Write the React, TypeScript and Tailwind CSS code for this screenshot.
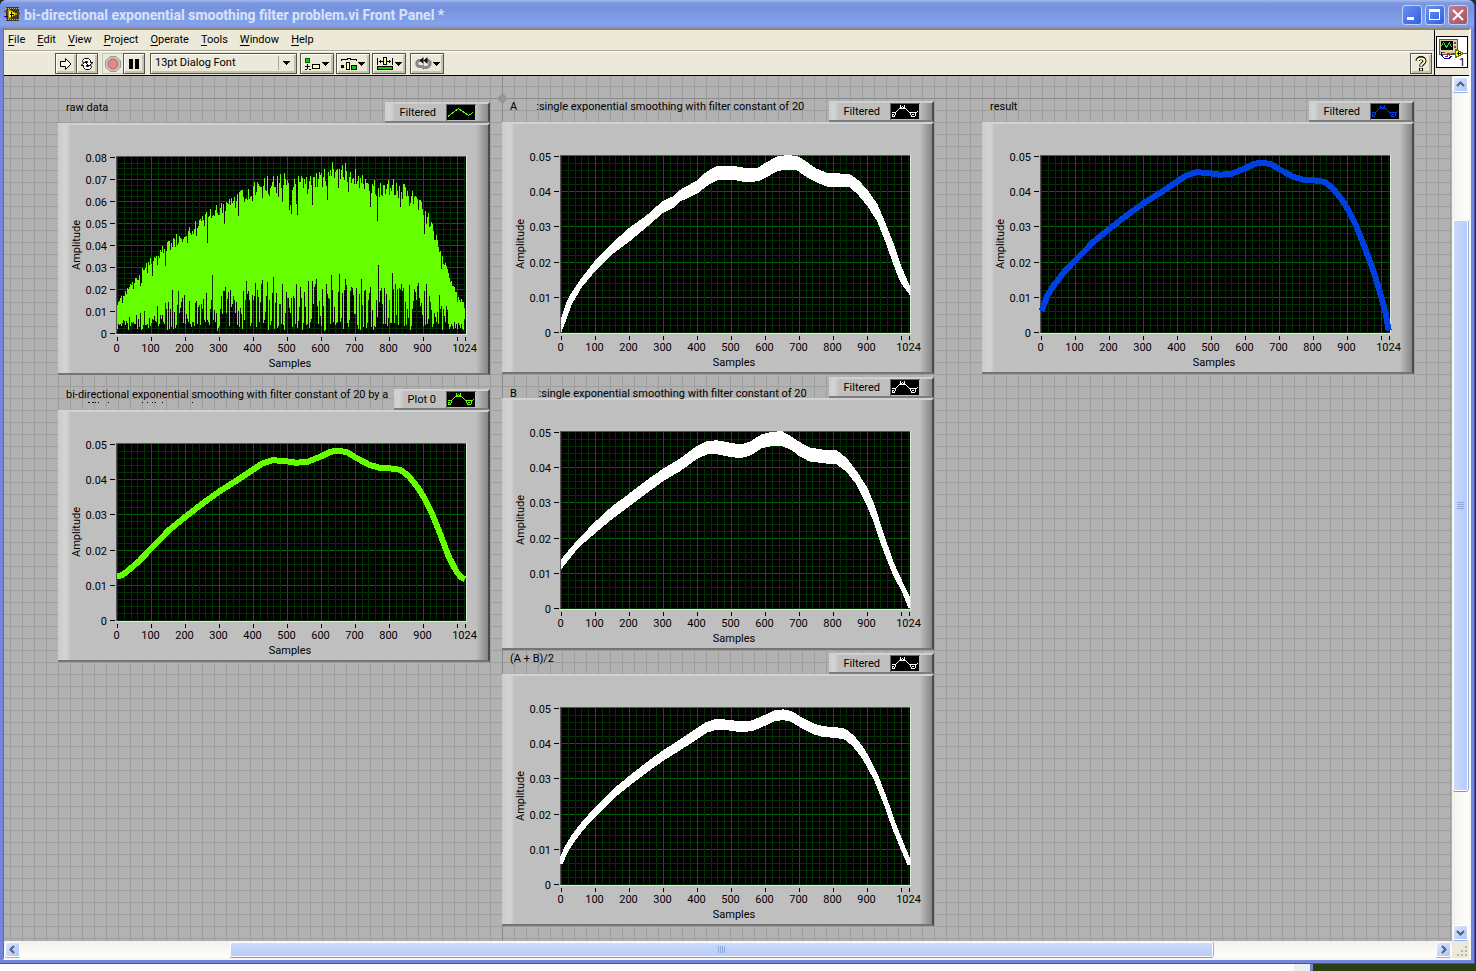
import React from 'react'

type Point = [number, number]
type Band = [number, number, number]

// Plot area inside a 432x252 graph plate
const PLOT = { left: 59, top: 34, width: 348, height: 176 }
const MAX_SAMPLE = 1024

const BODY: Point[] = [
  [66, 0.0168], [101, 0.0204], [154, 0.0256], [201, 0.0293], [252, 0.0331], [301, 0.0365],
  [350, 0.0395], [399, 0.0426], [428, 0.0445], [458, 0.0454], [497, 0.0451], [526, 0.0447],
  [560, 0.0449], [601, 0.0465], [629, 0.0478], [654, 0.0481], [678, 0.0476], [703, 0.0461],
  [742, 0.0441], [771, 0.0433], [810, 0.043], [835, 0.0426], [859, 0.0408], [884, 0.0378],
  [903, 0.0348], [928, 0.03], [953, 0.0239],
]

const RESULT: Point[] = [
  [2, 0.0059], [17, 0.0101], [36, 0.013], ...BODY, [977, 0.0177], [1001, 0.0101], [1014, 0.0054], [1023, 0.0004],
]

const BIDIRECTIONAL: Point[] = [
  [0, 0.0125], [15, 0.0127], [32, 0.014], ...BODY, [977, 0.0178], [1000, 0.0136], [1012, 0.0122], [1024, 0.0116],
]

const FORWARD: Band[] = [
  [0, 0.0035, 0], [15, 0.0078, 0.0038], [30, 0.0108, 0.0078], [60, 0.0151, 0.0128], [100, 0.02, 0.0174],
  [150, 0.025, 0.0222], [200, 0.0294, 0.0258], [250, 0.0328, 0.0298], [300, 0.0371, 0.034],
  [330, 0.0384, 0.0354], [350, 0.0402, 0.0372], [400, 0.0429, 0.0394], [430, 0.0455, 0.0417],
  [460, 0.047, 0.0433], [510, 0.047, 0.0433], [550, 0.0464, 0.0426], [580, 0.0466, 0.043],
  [605, 0.0481, 0.0441], [635, 0.0497, 0.0458], [665, 0.0501, 0.0463], [695, 0.0499, 0.0461],
  [715, 0.0487, 0.0446], [750, 0.0463, 0.0427], [785, 0.045, 0.0414], [820, 0.0449, 0.0414],
  [850, 0.0447, 0.0413], [875, 0.0429, 0.0391], [900, 0.0404, 0.0362], [930, 0.0362, 0.0318],
  [955, 0.0305, 0.0258], [980, 0.0244, 0.0191], [1000, 0.0187, 0.0142], [1024, 0.0132, 0.011],
]

const BACKWARD: Band[] = [
  [0, 0.0136, 0.0112], [50, 0.0193, 0.0172], [100, 0.0243, 0.0214], [150, 0.0287, 0.0254],
  [200, 0.0323, 0.029], [250, 0.036, 0.0326], [300, 0.0394, 0.0362], [350, 0.0423, 0.039],
  [400, 0.0459, 0.0425], [430, 0.0473, 0.0438], [460, 0.0475, 0.0438], [500, 0.0468, 0.043],
  [530, 0.0463, 0.0427], [560, 0.0473, 0.0436], [590, 0.0492, 0.0455], [620, 0.0499, 0.0461],
  [650, 0.0501, 0.0462], [680, 0.0484, 0.0449], [700, 0.0471, 0.0434], [730, 0.0455, 0.0418],
  [780, 0.0447, 0.0412], [810, 0.0447, 0.041], [840, 0.0425, 0.0389], [870, 0.0386, 0.0352],
  [900, 0.0342, 0.0295], [920, 0.0295, 0.0247], [950, 0.0205, 0.0162], [980, 0.0124, 0.0091],
  [1005, 0.0072, 0.0046], [1024, 0.0034, 0],
]

const AVERAGE_LINE: Point[] = [
  [0, 0.0065], [17, 0.0101], [36, 0.013], ...BODY, [980, 0.0165], [1002, 0.0112], [1024, 0.0062],
]

const AVERAGE: Band[] = AVERAGE_LINE.map(([s, v]) => {
  const half = 0.0007 + 0.0004 * Math.min(1, s / 400, (MAX_SAMPLE - s) / 150)
  return [s, v + half, v - half]
})

// Upper edge of the unfiltered signal
const RAW_ENVELOPE: Point[] = [
  [0, 0.0145], [50, 0.025], [100, 0.035], [150, 0.042], [200, 0.048], [259, 0.055], [300, 0.06],
  [380, 0.067], [459, 0.0725], [499, 0.0735], [560, 0.071], [600, 0.0735], [647, 0.08],
  [703, 0.0755], [760, 0.07], [815, 0.071], [879, 0.064], [926, 0.052], [945, 0.042],
  [984, 0.024], [1005, 0.016], [1024, 0.0155],
]

const xOf = (sample: number) => PLOT.left + (sample / MAX_SAMPLE) * PLOT.width
const yOf = (value: number, max: number) => PLOT.top + PLOT.height - (value / max) * PLOT.height

const interpolate = (points: Point[], s: number) => {
  for (let i = 1; i < points.length; i++) {
    const [x0, y0] = points[i - 1]
    const [x1, y1] = points[i]
    if (s <= x1) return y0 + ((y1 - y0) * (s - x0)) / (x1 - x0)
  }
  return points[points.length - 1][1]
}

const linePath = (points: Point[], max: number) =>
  points.map(([s, v], i) => `${i ? 'L' : 'M'}${xOf(s).toFixed(1)} ${yOf(v, max).toFixed(1)}`).join('')

const bandPath = (band: Band[], max: number) => {
  const upper: Point[] = band.map(([s, hi]) => [s, hi])
  const lower: Point[] = band.map(([s, , lo]): Point => [s, lo]).reverse()
  return `${linePath([...upper, ...lower], max)}Z`
}

const rawPath = (max: number) => {
  let seed = 7
  const random = () => {
    seed = (seed * 16807) % 2147483647
    return seed / 2147483647
  }
  let d = ''
  for (let px = 0; px < PLOT.width; px++) {
    const env = interpolate(RAW_ENVELOPE, (px / PLOT.width) * MAX_SAMPLE)
    const dip = random() > 0.84 ? 0.28 * random() : 0.12 * random()
    const top = env * (1 - dip)
    const r = random()
    let low = env * (0.05 + 0.3 * random())
    if (r > 0.94) low = env * (0.34 + 0.12 * random())
    if (r < 0.22) low = 0.001 + 0.004 * random()
    d += `M${PLOT.left + px + 0.5} ${yOf(top, max).toFixed(0)}V${yOf(low, max).toFixed(0)}`
  }
  return d
}

interface PlotProps {
  max: number
  minor: number
  children: React.ReactNode
}

const Plot: React.FC<PlotProps> = ({ max, minor, children }) => {
  const right = PLOT.left + PLOT.width
  const bottom = PLOT.top + PLOT.height
  const rows = Math.round(max * 100)
  const yLines = Array.from({ length: rows * minor + 1 }, (_, i) => i)
  const xLines = Array.from({ length: 52 }, (_, i) => i)
  const yAt = (i: number) => Math.round(yOf((i / minor) * 0.01, max)) + 0.5
  const xAt = (s: number) => Math.round(xOf(s)) + 0.5

  return (
    <svg width="432" height="252" viewBox="0 0 432 252" className="block font-['Roboto',sans-serif] text-[11px]">
      <g shapeRendering="crispEdges">
        <rect x={PLOT.left - 1} y={PLOT.top - 1} width={PLOT.width + 2} height={PLOT.height + 2} fill="#555" />
        <path d={`M${right + 1.5} ${PLOT.top - 1}V${bottom + 1.5}H${PLOT.left - 1}`} stroke="#e4e4e4" fill="none" />
        <rect x={PLOT.left} y={PLOT.top} width={PLOT.width + 1} height={PLOT.height + 1} fill="#000" />
        {yLines.slice(0, -1).map((i) => (
          <path key={i} d={`M${PLOT.left} ${yAt(i)}H${right + 1}`} stroke={i % minor || !i ? '#003200' : '#006400'} />
        ))}
        {xLines.map((i) => (
          <path key={i} d={`M${xAt(i * 20)} ${PLOT.top}V${bottom + 1}`} stroke={i % 5 || !i ? '#003200' : '#006400'} />
        ))}
        {children}
        {yLines.filter((i) => i % minor === 0).map((i) => (
          <path key={i} d={`M52 ${yAt(i)}h5`} stroke="#000" />
        ))}
        {[0, 100, 200, 300, 400, 500, 600, 700, 800, 900, 1000, 1024].map((s) => (
          <path key={s} d={`M${xAt(s)} 214v4`} stroke="#000" />
        ))}
      </g>
      {yLines.filter((i) => i % minor === 0).map((i) => (
        <text key={i} x="49" y={yAt(i) + 4} textAnchor="end">
          {i ? (i / minor / 100).toFixed(2) : '0'}
        </text>
      ))}
      {[0, 100, 200, 300, 400, 500, 600, 700, 800, 900, 1024].map((s) => (
        <text key={s} x={xAt(s) - 1} y="229" textAnchor="middle">
          {s}
        </text>
      ))}
      <text x="232" y="244" textAnchor="middle">Samples</text>
      <text transform="translate(22 122) rotate(-90)" textAnchor="middle">Amplitude</text>
    </svg>
  )
}

const PlotSwatch: React.FC<{ color: string; markers?: boolean }> = ({ color, markers = true }) => (
  <svg width="30" height="17" viewBox="0 0 30 17" shapeRendering="crispEdges">
    <path d="M0 17V0H30" stroke="#666" strokeWidth="2" fill="none" />
    <rect x="1" y="1" width="28" height="15" fill="#000" />
    {markers ? (
      <g fill={color}>
        {/* middle marker, slopes, then the left and right markers */}
        <path d="M10 2h1v3h-1zM14 2h1v3h-1zM11 4h1v1h-1zM13 4h1v1h-1zM12 3h1v1h-1zM10 5h5v1h-5z" />
        <path d="M9 5h1v1H9zM8 6h1v1H8zM7 7h1v1H7zM6 8h1v1H6zM15 5h1v1h-1zM16 6h1v1h-1zM17 7h1v1h-1zM18 8h1v1h-1zM19 9h1v1h-1z" />
        <path d="M2 9h4v1H2zM5 10h1v2H5zM4 12h1v2H4zM2 13h2v1H2zM2 11h1v2H2zM3 11h1v1H3z" />
        <path d="M20 9h7v1h-7zM20 10h1v2h-1zM21 12h1v2h-1zM22 13h3v1h-3zM25 10h1v3h-1zM22 11h2v1h-2zM27 8h1v1h-1z" />
      </g>
    ) : (
      <path d="M2 12.5L12.5 4.5L22.5 11.5L27 8.5" fill="none" stroke={color} />
    )}
  </svg>
)

interface GraphProps {
  title: React.ReactNode
  legend: string
  swatch: React.ReactNode
  lowTitle?: boolean
  children: React.ReactNode
}

const Graph: React.FC<GraphProps> = ({ title, legend, swatch, lowTitle, children }) => (
  <section className="w-[432px]">
    <div className={`flex h-[22px] justify-between pl-2 ${lowTitle ? 'items-end' : 'items-start'}`}>
      <h2 className={`min-w-0 leading-[13px] whitespace-pre ${lowTitle ? 'h-[11px]' : 'h-[15px]'}`}>{title}</h2>
      <div className="mt-px flex h-[21px] shrink-0 items-center self-start border-t-2 border-r-2 border-b-2 border-t-[#d0d0d0] border-r-[#4a4a4a] border-b-[#7d7d7d] bg-[linear-gradient(to_right,#cdcdcd,#d4d4d4_5px,#bfbfbf_10px,#bfbfbf_calc(100%-12px),#8a8a8a)] pr-3 pl-[14px]">
        <span className="pt-px pr-[10px]">{legend}</span>
        {swatch}
      </div>
    </div>
    <div className="border-t-2 border-r-2 border-b-2 border-t-[#d2d2d2] border-r-[#4a4a4a] border-b-[#757575] bg-[linear-gradient(to_right,#cbcbcb,#d4d4d4_8px,#bfbfbf_13px,#bfbfbf_calc(100%-12px),#858585)]">
      <div className="-my-0.5 -mr-0.5">{children}</div>
    </div>
  </section>
)

const MENU = ['File', 'Edit', 'View', 'Project', 'Operate', 'Tools', 'Window', 'Help']

const toolButton =
  'flex h-[21px] items-center justify-center border border-[#55554d] bg-[#ece9d8] shadow-[inset_1px_1px_0_#fff,inset_-2px_-2px_0_#c5c2b0]'

const Arrow = () => (
  <svg width="7" height="4" viewBox="0 0 7 4" shapeRendering="crispEdges">
    <path d="M0 0h7L3.5 4z" />
  </svg>
)

const Toolbar = () => (
  <div className="flex h-6 items-center border-t border-white pl-[51px]">
    <button aria-label="Run" className={`${toolButton} w-[22px]`}>
      <svg width="14" height="14" viewBox="0 0 14 14">
        <path d="M1.5 4.5H6.5V1.5L12 7L6.5 12.5V9.5H1.5Z" fill="#fff" stroke="#000" />
      </svg>
    </button>
    <button aria-label="Run continuously" className={`${toolButton} -ml-px w-[22px]`}>
      <svg width="16" height="14" viewBox="0 0 16 14" fill="#fff" stroke="#000">
        <path d="M3.5 3.5L5.5 1.5H9.5L11.5 3.5V5.5H14L10 9L6.5 5.5H8.5V4.5H6.5L4.5 6.5Z" />
        <path d="M12.5 10.5L10.5 12.5H6.5L4.5 10.5V8.5H2L6 5L9.5 8.5H7.5V9.5H9.5L11.5 7.5Z" />
      </svg>
    </button>
    <button aria-label="Abort execution" className="ml-1 flex h-[21px] w-[22px] items-center justify-center border border-[#c9c6b5]">
      <svg width="16" height="16" viewBox="0 0 16 16">
        <path d="M5 .5H11L15.5 5V11L11 15.5H5L.5 11V5Z" fill="#c8c5bb" stroke="#999690" />
        <circle cx="8" cy="8" r="5" fill="#ea8681" stroke="#a07070" />
      </svg>
    </button>
    <button aria-label="Pause" className={`${toolButton} -ml-px w-[22px]`}>
      <svg width="10" height="10" viewBox="0 0 10 10">
        <path d="M0 0h4v10H0zM6 0h4v10H6z" />
      </svg>
    </button>
    <div className="relative ml-[5px]">
      <select aria-label="Text settings" className={`${toolButton} w-[147px] appearance-none pl-1`}>
        <option>13pt Dialog Font</option>
      </select>
      <span className="pointer-events-none absolute top-[3px] right-[7px] flex h-[14px] items-center border-l border-[#aca899] pl-1">
        <Arrow />
      </span>
    </div>
    <button aria-label="Align objects" className={`${toolButton} ml-[3px] w-[34px] gap-px`}>
      <svg width="16" height="14" viewBox="0 0 16 14" shapeRendering="crispEdges">
        <rect x=".5" y="1.5" width="4" height="4" fill="#0c0" stroke="#060" />
        <rect x="7.5" y="7.5" width="7" height="4" fill="#ff9" stroke="#000" />
        <path d="M2 7h1v5H2zM0 9h5v1H0zM0 12h2v1H0zM4 12h2v1H4z" />
      </svg>
      <Arrow />
    </button>
    <button aria-label="Distribute objects" className={`${toolButton} ml-[2px] w-[34px] gap-px`}>
      <svg width="16" height="14" viewBox="0 0 16 14" shapeRendering="crispEdges">
        <path d="M0 3.5V2.5H6V1.5H9V2.5H15V3.5" fill="none" stroke="#000" />
        <path d="M0 8h3v3H0z" />
        <rect x="5.5" y="5.5" width="3" height="7" fill="#ff9" stroke="#000" />
        <rect x="10.5" y="8.5" width="5" height="4" fill="#0c0" stroke="#000" />
      </svg>
      <Arrow />
    </button>
    <button aria-label="Resize objects" className={`${toolButton} ml-[2px] w-[34px] gap-px`}>
      <svg width="17" height="14" viewBox="0 0 17 14" shapeRendering="crispEdges">
        <path d="M0 1h1v7H0zM15 1h1v7h-1zM2 4h4v1H2zM10 4h4v1h-4zM3 3h1v3H3zM12 3h1v3h-1z" />
        <rect x="6.5" y=".5" width="3" height="7" fill="#ff9" stroke="#000" />
        <rect x=".5" y="9.5" width="15" height="3" fill="#0c0" stroke="#000" />
      </svg>
      <Arrow />
    </button>
    <button aria-label="Reorder" className={`${toolButton} ml-[4px] w-[34px] gap-px`}>
      <svg width="17" height="14" viewBox="0 0 17 14" fill="none">
        <path d="M6 3.5H4C1 4.5 1 8.5 4 9.5H7M11 3.5H13C16 4.5 16 8.5 12 10.5H8" stroke="#888" strokeWidth="3" />
        <path d="M8.5 0V7L4.5 3.5ZM12.5 0V7L8.5 3.5Z" fill="#111" />
        <path d="M9 7v6L5.5 10z" fill="#888" />
      </svg>
      <Arrow />
    </button>
    <button aria-label="Show context help" className={`${toolButton} mr-0.5 ml-auto w-[22px]`}>
      <svg width="12" height="16" viewBox="0 0 12 16">
        <path d="M2.5 5C2.5 1 9.5 1 9.5 5C9.5 7.5 6 7.5 6 10.5M6 12V15" fill="none" stroke="#000" strokeWidth="4" />
        <path d="M2.5 5C2.5 1.5 9.5 1.5 9.5 5C9.5 7.5 6 7.5 6 10M6 12.5V14.5" fill="none" stroke="#ffb" strokeWidth="2" />
      </svg>
    </button>
  </div>
)

const ViIcon = () => (
  <svg width="32" height="32" viewBox="0 0 32 32" shapeRendering="crispEdges">
    <rect x=".5" y=".5" width="31" height="31" fill="#fff" stroke="#000" />
    <rect x="3.5" y="3.5" width="18" height="15" fill="#d6d2a8" stroke="#555" />
    <rect x="5" y="5" width="12" height="9" fill="#000" />
    <path d="M5.5 10L7.5 6.5L10.5 11.5L13.5 6.5L15.5 11" fill="none" stroke="#3d3" />
    <path d="M18 6h2v2h-2zM18 10h2v2h-2zM5 16h4v1H5z" fill="#844" />
    <path d="M5.5 16V19L8.5 22.5H13L15.5 20" fill="none" stroke="#00a" />
    <path d="M9 20.5H11.5V17.5H13.5V19.5L16 17.5H20M27 17.5H31" fill="none" stroke="#e00" />
    <path d="M19.5 13.5L27.5 17.5L19.5 21.5z" fill="#ff0" stroke="#770" />
    <path d="M21 17h4v1h-4zM22 16h1v3h-1z" fill="#000" />
    <text x="23" y="30" className="font-['Roboto',sans-serif] text-[11px]">1</text>
  </svg>
)

const ScrollButton: React.FC<{ label: string; d: string }> = ({ label, d }) => (
  <button
    aria-label={label}
    className="flex h-[15px] w-[15px] shrink-0 items-center justify-center rounded-[2px] border border-white bg-linear-to-br from-[#dce6fe] to-[#afc4f6] shadow-[0_1px_0_#8fb0e8]"
  >
    <svg width="9" height="9" viewBox="0 0 9 9">
      <path d={d} fill="none" stroke="#4d6185" strokeWidth="2" />
    </svg>
  </button>
)

const titleButton = 'flex h-5 w-5 items-center justify-center rounded-[3px] border border-[#c3d0f5]'

const App: React.FC = () => (
  <div className="flex h-screen flex-col overflow-hidden bg-[#1e2b3a] font-['Roboto',sans-serif] text-[11px] text-black">
    <main className="mr-px flex min-h-0 flex-1 flex-col rounded-t-[7px] border-r border-b border-[#4a4eb0] bg-[#7386d9] pr-[3px] pb-[3px] pl-[3px]">
      {/* Title bar */}
      <header className="-mx-[3px] flex h-7 shrink-0 items-center rounded-t-[6px] bg-[linear-gradient(to_bottom,#a4bbec,#7d99e2_3px,#7791dc_8px,#809fe8_20px,#86a3ec_24px,#7c93dc)] pr-1.5 pl-1">
        <svg width="16" height="14" viewBox="0 0 16 14" shapeRendering="crispEdges">
          <rect x="2" width="13" height="14" fill="#3c3c2c" />
          <path d="M2 1.5H15M2 12.5H15" stroke="#b9b48c" strokeDasharray="1 1" />
          <path d="M4.5 2.5L13 7L4.5 11.5z" fill="#ff0" stroke="#b80" />
          <path d="M6 7h4v1H6zM7 5h1v5H7z" />
          <path d="M0 4h4v1H0zM13 6h3v1h-3z" fill="#e00" />
          <path d="M0 9h4v1H0z" fill="#00c" />
        </svg>
        <h1 className="flex-1 pt-0.5 pl-1 text-[14px] font-bold text-[#d8e3fa]">
          bi-directional exponential smoothing filter problem.vi Front Panel *
        </h1>
        <div className="flex gap-[3px] pt-0.5">
          <button aria-label="Minimize" className={`${titleButton} bg-linear-to-br from-[#6a8ff0] to-[#2f5fdc]`}>
            <svg width="12" height="12" viewBox="0 0 12 12">
              <path d="M1 8h7v3H1z" fill="#fff" />
            </svg>
          </button>
          <button aria-label="Maximize" className={`${titleButton} bg-linear-to-br from-[#6a8ff0] to-[#2f5fdc]`}>
            <svg width="12" height="12" viewBox="0 0 12 12" shapeRendering="crispEdges">
              <path d="M0 0h11v11H0zM1 3v7h9V3z" fill="#fff" fillRule="evenodd" />
            </svg>
          </button>
          <button aria-label="Close" className={`${titleButton} bg-linear-to-br from-[#c08090] to-[#a85060]`}>
            <svg width="12" height="12" viewBox="0 0 12 12">
              <path d="M1 1l10 10M11 1l-10 10" stroke="#fff" strokeWidth="2" />
            </svg>
          </button>
        </div>
      </header>

      <div className="flex min-h-0 flex-1 flex-col border-t-2 border-r-2 border-b-2 border-l border-t-[#8a8776] border-r-[#f8f8f2] border-b-[#f8f8f2] border-l-[#716f64] bg-[#ece9d8]">
        {/* Menu bar and toolbar */}
        <div className="flex border-b border-black">
          <div className="flex-1">
            <nav className="flex h-[21px] items-center gap-3 border-b border-[#aca899] pl-1">
              {MENU.map((item) => (
                <button key={item}>
                  <span className="underline underline-offset-2">{item[0]}</span>
                  {item.slice(1)}
                </button>
              ))}
            </nav>
            <Toolbar />
          </div>
          <div className="border-l border-black pt-1.5 pr-px pl-px">
            <ViIcon />
          </div>
        </div>

        <div className="flex min-h-0 flex-1">
          {/* Front panel */}
          <div className="relative min-w-0 flex-1 overflow-hidden bg-[#b2b2b2] bg-[linear-gradient(#9e9e9e_1px,transparent_1px),linear-gradient(to_right,#9e9e9e_1px,transparent_1px)] bg-[size:12px_12px] bg-[position:6px_10px]">
            <div className="absolute top-[22px] left-0 h-px w-full bg-[#8a8a8a]" />
            <div className="absolute top-0 left-[498px] h-full w-px bg-[#8a8a8a]" />
            <svg className="absolute top-[17px] left-[493px]" width="11" height="11" viewBox="0 0 11 11">
              <path d="M5.5 0L11 5.5L5.5 11L0 5.5z" fill="#949494" />
            </svg>

            <div className="relative flex items-start pt-6 pl-[54px]">
              <div className="flex flex-col gap-[13px] pt-px">
                <Graph title="raw data" legend="Filtered" swatch={<PlotSwatch color="#6f0" markers={false} />}>
                  <Plot max={0.08} minor={4}>
                    <path d={rawPath(0.08)} stroke="#6f0" />
                  </Plot>
                </Graph>
                <Graph
                  title={
                    <>
                      bi-directional exponential smoothing with filter constant of 20 by{' '}a
                      {/* only the tips of the second line clear the label's lower edge */}
                      <svg width="130" height="2" viewBox="0 0 130 2" className="block" shapeRendering="crispEdges">
                        <path d="M22 1h2v1h-2zM26 1h2v1h-2zM29 1h1v1h-1zM32 1h1v1h-1zM42 1h1v1h-1zM76 1h1v1h-1zM81 1h1v1h-1zM86 1h1v1h-1zM89 1h1v1h-1zM96 1h1v1h-1zM126 1h1v1h-1z" />
                      </svg>
                    </>
                  }
                  legend="Plot 0"
                  swatch={<PlotSwatch color="#6f0" />}
                >
                  <Plot max={0.05} minor={5}>
                    <path d={linePath(BIDIRECTIONAL, 0.05)} fill="none" stroke="#6f0" strokeWidth="6" />
                  </Plot>
                </Graph>
              </div>

              <div className="ml-3 flex flex-col gap-0.5">
                <Graph
                  title="A       :single exponential smoothing with filter constant of 20"
                  legend="Filtered"
                  swatch={<PlotSwatch color="#fff" />}
                >
                  <Plot max={0.05} minor={5}>
                    <path d={bandPath(FORWARD, 0.05)} fill="#fff" stroke="#fff" />
                  </Plot>
                </Graph>
                <Graph
                  title="B        :single exponential smoothing with filter constant of 20"
                  legend="Filtered"
                  swatch={<PlotSwatch color="#fff" />}
                  lowTitle
                >
                  <Plot max={0.05} minor={5}>
                    <path d={bandPath(BACKWARD, 0.05)} fill="#fff" stroke="#fff" />
                  </Plot>
                </Graph>
                <Graph title="(A + B)/2" legend="Filtered" swatch={<PlotSwatch color="#fff" />}>
                  <Plot max={0.05} minor={5}>
                    <path d={bandPath(AVERAGE, 0.05)} fill="#fff" stroke="#fff" strokeWidth="3" />
                  </Plot>
                </Graph>
              </div>

              <div className="ml-12">
                <Graph title="result" legend="Filtered" swatch={<PlotSwatch color="#0040e0" />}>
                  <Plot max={0.05} minor={5}>
                    <path d={linePath(RESULT, 0.05)} fill="none" stroke="#0040e0" strokeWidth="6" />
                  </Plot>
                </Graph>
              </div>
            </div>
          </div>

          {/* Vertical scroll bar */}
          <div className="flex w-[17px] shrink-0 flex-col items-center bg-linear-to-r from-[#f3f1ec] to-[#fefefb] py-px">
            <ScrollButton label="Scroll up" d="M1 6l3.5-3.5L8 6" />
            <div className="grow-[128] basis-0" />
            <div className="flex w-[15px] grow-[569] basis-0 flex-col items-center justify-center gap-px rounded-[2px] border border-white bg-linear-to-r from-[#cbdafd] to-[#b8cbf8] shadow-[0_1px_0_#6f97e0,1px_0_0_#8fb0e8]">
              {[0, 1, 2, 3].map((i) => (
                <div key={i} className="h-px w-[7px] bg-[#8fa8e0]" />
              ))}
            </div>
            <div className="grow-[134] basis-0" />
            <ScrollButton label="Scroll down" d="M1 3l3.5 3.5L8 3" />
          </div>
        </div>

        {/* Horizontal scroll bar */}
        <div className="flex h-[17px] shrink-0">
          <div className="flex flex-1 items-center bg-linear-to-b from-[#f3f1ec] to-[#fefefb] px-px">
            <ScrollButton label="Scroll left" d="M6 1L2.5 4.5L6 8" />
            <div className="grow-[210] basis-0" />
            <div className="flex h-[15px] grow-[982] basis-0 items-center justify-center gap-px rounded-[2px] border border-white bg-linear-to-b from-[#cbdafd] to-[#b8cbf8] shadow-[0_1px_0_#6f97e0,1px_0_0_#8fb0e8]">
              {[0, 1, 2, 3].map((i) => (
                <div key={i} className="h-[7px] w-px bg-[#8fa8e0]" />
              ))}
            </div>
            <div className="grow-[223] basis-0" />
            <ScrollButton label="Scroll right" d="M3 1l3.5 3.5L3 8" />
          </div>
          <svg width="17" height="17" viewBox="0 0 17 17" shapeRendering="crispEdges">
            <path d="M13 5h2v2h-2zM9 9h2v2H9zM13 9h2v2h-2zM5 13h2v2H5zM9 13h2v2H9zM13 13h2v2h-2z" fill="#b8b4a2" />
          </svg>
        </div>
      </div>
    </main>

    {/* Windows behind, along the bottom edge */}
    <div className="flex h-[7px] shrink-0">
      <div className="flex-1 bg-white" />
      <div className="w-4 bg-[#eeeeee]" />
      <div className="w-[3px] bg-[#6f86c8]" />
      <div className="w-[163px] bg-[#2a4014]" />
    </div>
  </div>
)

export default App
